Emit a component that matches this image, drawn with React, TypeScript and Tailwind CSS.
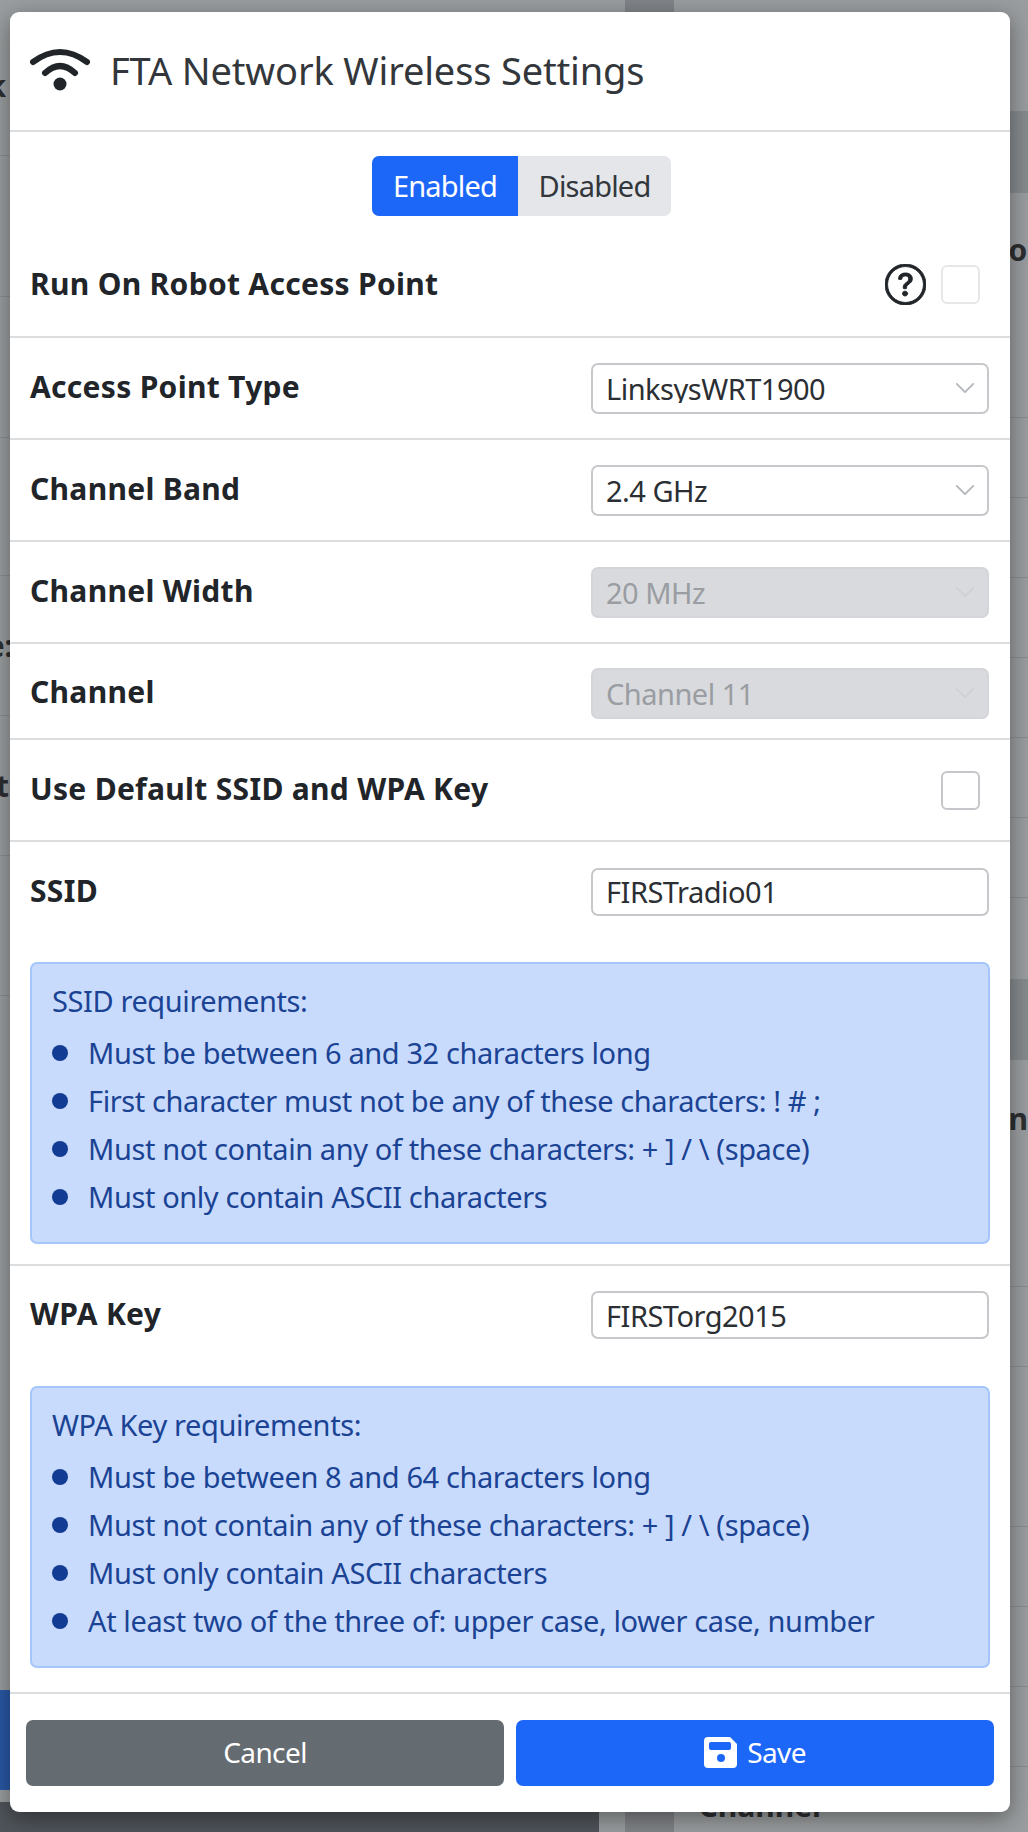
import React from "react";
import { BsQuestionCircle } from "react-icons/bs";

const font = "font-['Noto_Sans','Liberation_Sans',sans-serif]";

const leftRows = [
  { h: 140, text: "k", w: 6 },
  { h: 141, text: "", w: 9 },
  { h: 141, text: "", w: 9 },
  { h: 138, text: "", w: 9 },
  { h: 140, text: "e:", w: 13 },
  { h: 140, text: "nt", w: 9 },
  { h: 140, text: "", w: 9 },
];

const rightRows = [
  { h: 111, band: false, line: false, text: "" },
  { h: 82, band: true, line: false, text: "" },
  { h: 112, band: false, line: false, text: "o" },
  { h: 113, band: false, line: true, text: "" },
  { h: 80, band: false, line: true, text: "" },
  { h: 80, band: false, line: true, text: "" },
  { h: 80, band: false, line: true, text: "" },
  { h: 80, band: false, line: true, text: "" },
  { h: 80, band: false, line: true, text: "" },
  { h: 80, band: false, line: true, text: "" },
  { h: 81, band: false, line: false, text: "" },
  { h: 81, band: true, line: false, text: "" },
  { h: 117, band: false, line: false, text: "n" },
  { h: 110, band: false, line: true, text: "" },
  { h: 80, band: false, line: true, text: "" },
  { h: 160, band: false, line: true, text: "" },
  { h: 80, band: false, line: true, text: "" },
  { h: 80, band: false, line: true, text: "" },
  { h: 80, band: false, line: true, text: "" },
];

function WifiIcon() {
  return (
    <svg viewBox="0 0 60 44" className="h-[44px] w-[60px] shrink-0" fill="none" stroke="#212529" strokeLinecap="round">
      <path d="M3 14Q30 -6 57 14" strokeWidth="6" />
      <path d="M15 25Q30 11 45 25" strokeWidth="6" />
      <circle cx="30" cy="36" r="6.5" fill="#212529" stroke="none" />
    </svg>
  );
}

function SaveIcon() {
  return (
    <svg viewBox="0 0 33 31" className="h-[31px] w-[33px] shrink-0">
      <path d="M4 0H26L33 7V27A4 4 0 0 1 29 31H4A4 4 0 0 1 0 27V4A4 4 0 0 1 4 0Z" fill="#ffffff" />
      <rect x="5" y="5" width="22" height="8" rx="2" fill="#1d67f8" />
      <circle cx="17" cy="21" r="4" fill="#1d67f8" />
    </svg>
  );
}

function Chevron({ muted }: { muted?: boolean }) {
  return (
    <svg
      viewBox="0 0 16 16"
      className="absolute right-[13px] top-1/2 h-[22px] w-[22px] -translate-y-1/2"
      fill="none"
      stroke={muted ? "#cfd1d4" : "#b3b6ba"}
      strokeWidth="1.3"
      strokeLinecap="round"
      strokeLinejoin="round"
    >
      <path d="M2 5l6 6 6-6" />
    </svg>
  );
}

function SelectBox({ value, disabled }: { value: string; disabled?: boolean }) {
  return (
    <div className="relative w-[398px]">
      <select
        disabled={disabled}
        defaultValue={value}
        className={`block h-[51px] w-full appearance-none rounded-[7px] border-2 pl-[13px] pr-10 text-[29px] leading-none tracking-[-0.5px] ${
          disabled
            ? "border-[#d4d5da] bg-[#d9dade] text-[#9a9da1]"
            : "border-[#c6c8cb] bg-white text-[#2b2f33]"
        }`}
      >
        <option>{value}</option>
      </select>
      <Chevron muted={disabled} />
    </div>
  );
}

function TextBox({ value }: { value: string }) {
  return (
    <input
      readOnly
      value={value}
      className="block h-[48px] w-[398px] rounded-[7px] border-2 border-[#c6c8cb] bg-white pl-[13px] text-[29px] tracking-[-0.5px] text-[#2b2f33] outline-none"
    />
  );
}

function Row({
  label,
  height,
  children,
  border = true,
  extra = "",
}: {
  label: string;
  height: string;
  children?: React.ReactNode;
  border?: boolean;
  extra?: string;
}) {
  return (
    <div
      className={`flex items-center justify-between pl-5 pr-[21px] ${height} ${extra} ${
        border ? "border-b-2 border-[#dcdddf]" : ""
      }`}
    >
      <span className="pb-[3px] text-[30px] font-bold tracking-[0.3px] text-[#212529]">{label}</span>
      {children}
    </div>
  );
}

function Requirements({ title, items }: { title: string; items: string[] }) {
  return (
    <div className="mx-5 rounded-[7px] border-2 border-[#a5c6fa] bg-[#c8dbfc] pb-[21px] pl-[20px] pt-[18px] text-[29px] tracking-[-0.4px] text-[#1b4394]">
      <p className="h-[38px] leading-[38px]">{title}</p>
      <ul className="mt-[9px] flex flex-col">
        {items.map((item) => (
          <li key={item} className="flex h-[48px] items-center gap-[20px]">
            <span className="h-[16px] w-[16px] shrink-0 rounded-full bg-[#123c93]" />
            {item}
          </li>
        ))}
      </ul>
    </div>
  );
}

export default function App() {
  return (
    <div className={`relative h-[1832px] w-[1028px] overflow-hidden bg-[#9a9d9f] ${font}`}>
      {/* PAGE BEHIND THE BACKDROP */}
      <div className="flex h-full">
        <div className="flex w-[602px] flex-col">
          <div className="h-[16px]" />
          {leftRows.map((row, i) => (
            <div key={i} className="flex items-center border-b border-[#8a8d90]" style={{ height: row.h }}>
              <div
                className="flex justify-end overflow-hidden text-[30px] font-bold text-[#2c2e30]"
                style={{ width: row.w }}
              >
                <span className="shrink-0">{row.text}</span>
              </div>
            </div>
          ))}
          <div className="flex-1" />
          <div className="h-[100px] w-full bg-[#2a57a5]" />
          <div className="h-[12px]" />
          <div className="h-[30px] bg-[#4f545a]" />
        </div>
        <div className="w-[26px]" />
        <div className="w-[50px] bg-[#808387]" />
        <div className="flex flex-1 flex-col">
          {rightRows.map((row, i) => (
            <div
              key={i}
              className={`flex items-center pl-[334px] text-[30px] font-bold text-[#2c2e30] ${
                row.band ? "bg-[#858a8d]" : ""
              } ${row.line ? "border-b border-[#8a8d90]" : ""}`}
              style={{ height: row.h }}
            >
              {row.text}
            </div>
          ))}
          <div className="pl-[24px] pt-[19px] text-[30px] font-bold leading-[40px] text-[#2c2e30]">Channel</div>
        </div>
      </div>

      {/* MODAL */}
      <div className="absolute left-[10px] top-[12px] flex h-[1800px] w-[1000px] flex-col rounded-[9px] bg-white shadow-[0_6px_22px_rgba(0,0,0,0.4)]">
        <div className="flex h-[120px] items-center gap-5 border-b-2 border-[#dcdddf] pb-[2px] pl-5">
          <WifiIcon />
          <h1 className="text-[38px] tracking-[-0.15px] text-[#33373b]">FTA Network Wireless Settings</h1>
        </div>

        <div className="flex h-[101px] justify-center pl-[23px] pt-[24px]">
          <div className="flex h-[60px] w-[299px] overflow-hidden rounded-[7px] bg-[#e5e6ea] text-[29px] tracking-[-0.8px]">
            <div className="flex w-[146px] items-center justify-center bg-[#1d67f8] text-white">Enabled</div>
            <div className="flex flex-1 items-center justify-center text-[#33373b]">Disabled</div>
          </div>
        </div>

        <Row label="Run On Robot Access Point" height="h-[105px]">
          <div className="flex items-center gap-[15px]">
            <BsQuestionCircle className="h-[41px] w-[41px] text-[#212529]" stroke="currentColor" strokeWidth={0.35} />
            <div className="mr-[9px] h-[39px] w-[39px] rounded-[6px] border-2 border-[#e6e7e9] bg-white" />
          </div>
        </Row>
        <Row label="Access Point Type" height="h-[102px]">
          <SelectBox value="LinksysWRT1900" />
        </Row>
        <Row label="Channel Band" height="h-[102px]">
          <SelectBox value="2.4 GHz" />
        </Row>
        <Row label="Channel Width" height="h-[102px]">
          <SelectBox value="20 MHz" disabled />
        </Row>
        <Row label="Channel" height="h-[96px]" extra="pt-[4px]">
          <SelectBox value="Channel 11" disabled />
        </Row>
        <Row label="Use Default SSID and WPA Key" height="h-[102px]">
          <div className="mr-[9px] h-[39px] w-[39px] rounded-[6px] border-2 border-[#c4c6c9] bg-white" />
        </Row>

        <div className="border-b-2 border-[#dcdddf] pb-[20px]">
          <Row label="SSID" height="h-[99px]" border={false}>
            <TextBox value="FIRSTradio01" />
          </Row>
          <div className="pt-[21px]">
            <Requirements
              title="SSID requirements:"
              items={[
                "Must be between 6 and 32 characters long",
                "First character must not be any of these characters: ! # ;",
                "Must not contain any of these characters: + ] / \\ (space)",
                "Must only contain ASCII characters",
              ]}
            />
          </div>
        </div>

        <div className="border-b-2 border-[#dcdddf] pb-[24px]">
          <Row label="WPA Key" height="h-[98px]" border={false}>
            <TextBox value="FIRSTorg2015" />
          </Row>
          <div className="pt-[22px]">
            <Requirements
              title="WPA Key requirements:"
              items={[
                "Must be between 8 and 64 characters long",
                "Must not contain any of these characters: + ] / \\ (space)",
                "Must only contain ASCII characters",
                "At least two of the three of: upper case, lower case, number",
              ]}
            />
          </div>
        </div>

        {/* FOOTER */}
        <div className="flex gap-[12px] px-4 pt-[26px] text-[28px] tracking-[-0.6px] text-white">
          <button className="flex h-[66px] flex-1 items-center justify-center rounded-[7px] bg-[#646b71] pb-[2px]">
            Cancel
          </button>
          <button className="flex h-[66px] flex-1 items-center justify-center gap-[10px] rounded-[7px] bg-[#1d67f8] pb-[2px]">
            <SaveIcon />
            Save
          </button>
        </div>
      </div>
    </div>
  );
}
